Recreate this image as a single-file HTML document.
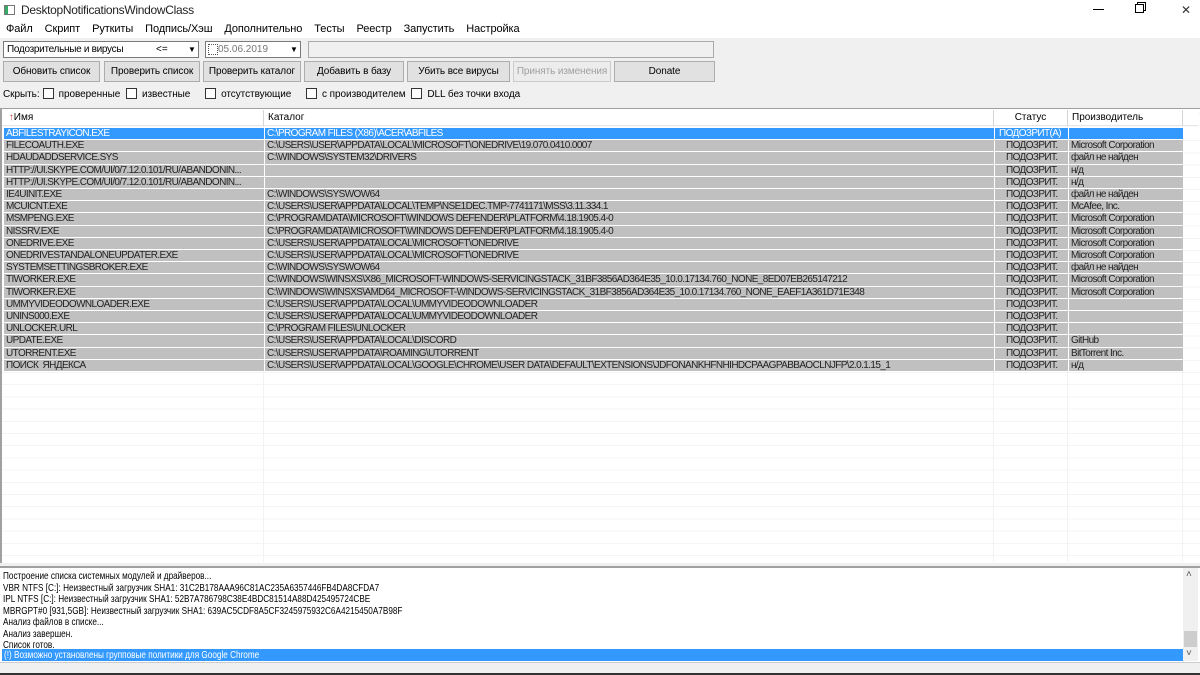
<!DOCTYPE html>
<html><head><meta charset="utf-8"><style>
*{margin:0;padding:0;box-sizing:border-box}
body{width:1200px;height:675px;overflow:hidden;background:#f0f0f0;font-family:"Liberation Sans",sans-serif;font-size:10px;color:#000;position:relative}
.a{position:absolute;white-space:nowrap}
.title{left:0;top:0;width:1200px;height:20px;background:#fff}
.menu{left:0;top:20px;width:1200px;height:18px;background:#fff}
.menu span{margin-right:12px}
.combo{background:#fff;border:1px solid #7a7a7a;height:17px;top:41px}
.btn{top:61px;height:21px;border:1px solid #adadad;background:#e1e1e1;text-align:center;line-height:19px;font-size:10px;letter-spacing:-.1px}
.cb{display:inline-block;width:11px;height:11px;border:1px solid #333;background:#fff;vertical-align:-2px;margin:0 5px 0 3px}
.list{left:0;top:108px;width:1200px;height:455px;background:#fff;border-top:1px solid #a0a0a0;border-left:2px solid #a0a0a0}
.hdr{left:2px;top:110px;height:16px;width:1196px;background:#fff;border-bottom:1px solid #e5e5e5}
.hc{position:absolute;top:0;height:16px;line-height:15px;border-right:1px solid #d5d5d5;padding-left:4px}
.row{position:absolute;left:0;width:1178px;height:12.2px;line-height:11.4px;font-size:10px;letter-spacing:-.6px;color:#222}
.row div{position:absolute;top:0;height:11.2px;background:#c0c0c0;overflow:hidden;padding-left:2px}
.row.sel div{background:#3399ff;color:#fff}
.log{left:0;top:566px;width:1200px;height:96px;background:#fff;border-top:2px solid #a0a0a0}
.logt{position:absolute;left:3px;top:3px;font-size:10.5px;line-height:11.5px;transform:scaleX(.78);transform-origin:0 0;white-space:nowrap}
</style></head><body>
<div class="a title"><span class="a" style="left:4px;top:5px;width:11px;height:10px;border:1px solid #777;background:linear-gradient(90deg,#3a6 0 3px,#fff 3px)"></span><span class="a" style="left:21px;top:3px;font-size:12px;letter-spacing:-.3px;color:#222">DesktopNotificationsWindowClass</span>
<span class="a" style="left:1093px;top:9px;width:11px;border-top:1px solid #000"></span>
<span class="a" style="left:1135px;top:4px;width:9px;height:9px;border:1px solid #000;background:#fff;box-shadow:2px -2px 0 -1px #fff,2px -2px 0 0 #000"></span>
<span class="a" style="left:1181px;top:3px;font-size:12px;color:#333">✕</span></div>
<div class="a menu"><div class="a" style="left:6px;top:3px;font-size:11px;letter-spacing:-.1px"><span>Файл</span><span>Скрипт</span><span>Руткиты</span><span>Подпись/Хэш</span><span>Дополнительно</span><span>Тесты</span><span>Реестр</span><span>Запустить</span><span>Настройка</span></div></div>
<div class="a combo" style="left:3px;width:196px"><span class="a" style="left:3px;top:2px;font-size:10px;letter-spacing:-.3px">Подозрительные и вирусы</span><span class="a" style="left:152px;top:2px">&lt;=</span><span class="a" style="left:181px;top:0;width:14px;height:15px;text-align:center;font-size:8px;line-height:15px">▼</span></div>
<div class="a combo" style="left:205px;width:96px"><span class="a" style="left:2px;top:2px;width:10px;height:11px;border:1px dotted #555"></span><span class="a" style="left:12px;top:2px;color:#777;font-size:10px">05.06.2019</span><span class="a" style="left:81px;top:0;width:14px;height:15px;text-align:center;font-size:8px;line-height:15px">▼</span></div>
<div class="a combo" style="left:308px;width:406px;background:#f0f0f0;border-color:#aaa"></div>
<div class="a btn" style="left:3px;width:97px">Обновить список</div>
<div class="a btn" style="left:104px;width:96px">Проверить список</div>
<div class="a btn" style="left:203px;width:98px">Проверить каталог</div>
<div class="a btn" style="left:304px;width:100px">Добавить в базу</div>
<div class="a btn" style="left:407px;width:103px">Убить все вирусы</div>
<div class="a btn" style="left:513px;width:98px;color:#a0a0a0;border-color:#ccc;background:#ececec">Принять изменения</div>
<div class="a btn" style="left:614px;width:101px">Donate</div>
<div class="a" style="left:3px;top:88px;font-size:10px;letter-spacing:-.05px">Скрыть:<span class="cb"></span>проверенные <span class="cb"></span>известные <span class="cb" style="margin-left:12px"></span>отсутствующие <span class="cb" style="margin-left:12px"></span>с производителем <span class="cb"></span>DLL без точки входа</div>
<div class="a list" style="background:#fff repeating-linear-gradient(180deg,transparent 0 11.2px,#f4f4f4 11.2px 12.2px);background-position:0 20px"></div>
<div class="a" style="left:263px;top:126px;width:1px;height:436px;background:#f2f2f2"></div>
<div class="a" style="left:993px;top:126px;width:1px;height:436px;background:#f2f2f2"></div>
<div class="a" style="left:1067px;top:126px;width:1px;height:436px;background:#f2f2f2"></div>
<div class="a" style="left:1182px;top:126px;width:1px;height:436px;background:#f2f2f2"></div>
<div class="a hdr"><div class="hc" style="left:0;width:262px">&nbsp;<span style="color:#c33">↑</span>Имя</div><div class="hc" style="left:262px;width:730px">Каталог</div><div class="hc" style="left:992px;width:74px;text-align:center;padding:0">Статус</div><div class="hc" style="left:1066px;width:115px">Производитель</div></div>
<div class="a" style="left:4px;top:128px">
<div class="row sel" style="top:0"><div style="left:0;width:260px">ABFILESTRAYICON.EXE</div><div style="left:261px;width:729px">C:\PROGRAM FILES (X86)\ACER\ABFILES</div><div style="left:991px;width:73px;padding:0 0 0 4px">ПОДОЗРИТ(A)</div><div style="left:1065px;width:114px"></div></div>
</div>
<div class="a" style="left:4px;top:140.2px">
<div class="row" style="top:0"><div style="left:0;width:260px">FILECOAUTH.EXE</div><div style="left:261px;width:729px">C:\USERS\USER\APPDATA\LOCAL\MICROSOFT\ONEDRIVE\19.070.0410.0007</div><div style="left:991px;width:73px;padding-left:11px">ПОДОЗРИТ.</div><div style="left:1065px;width:114px">Microsoft Corporation</div></div>
<div class="row" style="top:12.2px"><div style="left:0;width:260px">HDAUDADDSERVICE.SYS</div><div style="left:261px;width:729px">C:\WINDOWS\SYSTEM32\DRIVERS</div><div style="left:991px;width:73px;padding-left:11px">ПОДОЗРИТ.</div><div style="left:1065px;width:114px">файл не найден</div></div>
<div class="row" style="top:24.4px"><div style="left:0;width:260px">HTTP://UI.SKYPE.COM/UI/0/7.12.0.101/RU/ABANDONIN...</div><div style="left:261px;width:729px"></div><div style="left:991px;width:73px;padding-left:11px">ПОДОЗРИТ.</div><div style="left:1065px;width:114px">н/д</div></div>
<div class="row" style="top:36.6px"><div style="left:0;width:260px">HTTP://UI.SKYPE.COM/UI/0/7.12.0.101/RU/ABANDONIN...</div><div style="left:261px;width:729px"></div><div style="left:991px;width:73px;padding-left:11px">ПОДОЗРИТ.</div><div style="left:1065px;width:114px">н/д</div></div>
<div class="row" style="top:48.8px"><div style="left:0;width:260px">IE4UINIT.EXE</div><div style="left:261px;width:729px">C:\WINDOWS\SYSWOW64</div><div style="left:991px;width:73px;padding-left:11px">ПОДОЗРИТ.</div><div style="left:1065px;width:114px">файл не найден</div></div>
<div class="row" style="top:61px"><div style="left:0;width:260px">MCUICNT.EXE</div><div style="left:261px;width:729px">C:\USERS\USER\APPDATA\LOCAL\TEMP\NSE1DEC.TMP-7741171\MSS\3.11.334.1</div><div style="left:991px;width:73px;padding-left:11px">ПОДОЗРИТ.</div><div style="left:1065px;width:114px">McAfee, Inc.</div></div>
<div class="row" style="top:73.2px"><div style="left:0;width:260px">MSMPENG.EXE</div><div style="left:261px;width:729px">C:\PROGRAMDATA\MICROSOFT\WINDOWS DEFENDER\PLATFORM\4.18.1905.4-0</div><div style="left:991px;width:73px;padding-left:11px">ПОДОЗРИТ.</div><div style="left:1065px;width:114px">Microsoft Corporation</div></div>
<div class="row" style="top:85.4px"><div style="left:0;width:260px">NISSRV.EXE</div><div style="left:261px;width:729px">C:\PROGRAMDATA\MICROSOFT\WINDOWS DEFENDER\PLATFORM\4.18.1905.4-0</div><div style="left:991px;width:73px;padding-left:11px">ПОДОЗРИТ.</div><div style="left:1065px;width:114px">Microsoft Corporation</div></div>
<div class="row" style="top:97.6px"><div style="left:0;width:260px">ONEDRIVE.EXE</div><div style="left:261px;width:729px">C:\USERS\USER\APPDATA\LOCAL\MICROSOFT\ONEDRIVE</div><div style="left:991px;width:73px;padding-left:11px">ПОДОЗРИТ.</div><div style="left:1065px;width:114px">Microsoft Corporation</div></div>
<div class="row" style="top:109.8px"><div style="left:0;width:260px">ONEDRIVESTANDALONEUPDATER.EXE</div><div style="left:261px;width:729px">C:\USERS\USER\APPDATA\LOCAL\MICROSOFT\ONEDRIVE</div><div style="left:991px;width:73px;padding-left:11px">ПОДОЗРИТ.</div><div style="left:1065px;width:114px">Microsoft Corporation</div></div>
<div class="row" style="top:122px"><div style="left:0;width:260px">SYSTEMSETTINGSBROKER.EXE</div><div style="left:261px;width:729px">C:\WINDOWS\SYSWOW64</div><div style="left:991px;width:73px;padding-left:11px">ПОДОЗРИТ.</div><div style="left:1065px;width:114px">файл не найден</div></div>
<div class="row" style="top:134.2px"><div style="left:0;width:260px">TIWORKER.EXE</div><div style="left:261px;width:729px">C:\WINDOWS\WINSXS\X86_MICROSOFT-WINDOWS-SERVICINGSTACK_31BF3856AD364E35_10.0.17134.760_NONE_8ED07EB265147212</div><div style="left:991px;width:73px;padding-left:11px">ПОДОЗРИТ.</div><div style="left:1065px;width:114px">Microsoft Corporation</div></div>
<div class="row" style="top:146.4px"><div style="left:0;width:260px">TIWORKER.EXE</div><div style="left:261px;width:729px">C:\WINDOWS\WINSXS\AMD64_MICROSOFT-WINDOWS-SERVICINGSTACK_31BF3856AD364E35_10.0.17134.760_NONE_EAEF1A361D71E348</div><div style="left:991px;width:73px;padding-left:11px">ПОДОЗРИТ.</div><div style="left:1065px;width:114px">Microsoft Corporation</div></div>
<div class="row" style="top:158.6px"><div style="left:0;width:260px">UMMYVIDEODOWNLOADER.EXE</div><div style="left:261px;width:729px">C:\USERS\USER\APPDATA\LOCAL\UMMYVIDEODOWNLOADER</div><div style="left:991px;width:73px;padding-left:11px">ПОДОЗРИТ.</div><div style="left:1065px;width:114px"></div></div>
<div class="row" style="top:170.8px"><div style="left:0;width:260px">UNINS000.EXE</div><div style="left:261px;width:729px">C:\USERS\USER\APPDATA\LOCAL\UMMYVIDEODOWNLOADER</div><div style="left:991px;width:73px;padding-left:11px">ПОДОЗРИТ.</div><div style="left:1065px;width:114px"></div></div>
<div class="row" style="top:183px"><div style="left:0;width:260px">UNLOCKER.URL</div><div style="left:261px;width:729px">C:\PROGRAM FILES\UNLOCKER</div><div style="left:991px;width:73px;padding-left:11px">ПОДОЗРИТ.</div><div style="left:1065px;width:114px"></div></div>
<div class="row" style="top:195.2px"><div style="left:0;width:260px">UPDATE.EXE</div><div style="left:261px;width:729px">C:\USERS\USER\APPDATA\LOCAL\DISCORD</div><div style="left:991px;width:73px;padding-left:11px">ПОДОЗРИТ.</div><div style="left:1065px;width:114px">GitHub</div></div>
<div class="row" style="top:207.4px"><div style="left:0;width:260px">UTORRENT.EXE</div><div style="left:261px;width:729px">C:\USERS\USER\APPDATA\ROAMING\UTORRENT</div><div style="left:991px;width:73px;padding-left:11px">ПОДОЗРИТ.</div><div style="left:1065px;width:114px">BitTorrent Inc.</div></div>
<div class="row" style="top:219.6px"><div style="left:0;width:260px">ПОИСК&nbsp;&nbsp;ЯНДЕКСА</div><div style="left:261px;width:729px">C:\USERS\USER\APPDATA\LOCAL\GOOGLE\CHROME\USER DATA\DEFAULT\EXTENSIONS\JDFONANKHFNHIHDCPAAGPABBAOCLNJFP\2.0.1.15_1</div><div style="left:991px;width:73px;padding-left:11px">ПОДОЗРИТ.</div><div style="left:1065px;width:114px">н/д</div></div>
</div>
<div class="a log"><div class="logt">Построение списка системных модулей и драйверов...<br>VBR NTFS [C:]: Неизвестный загрузчик SHA1: 31C2B178AAA96C81AC235A6357446FB4DA8CFDA7<br>IPL NTFS [C:]: Неизвестный загрузчик SHA1: 52B7A786798C38E4BDC81514A88D425495724CBE<br>MBRGPT#0 [931,5GB]: Неизвестный загрузчик SHA1: 639AC5CDF8A5CF3245975932C6A4215450A7B98F<br>Анализ файлов в списке...<br>Анализ завершен.<br>Список готов.</div></div>
<div class="a" style="left:2px;top:649px;width:1181px;height:12px;background:#3399ff"><div class="logt" style="left:2px;top:0;line-height:12px;color:#fff">(!) Возможно установлены групповые политики для Google Chrome</div></div>
<div class="a" style="left:1183px;top:568px;width:15px;height:93px;background:#f0f0f0"><span class="a" style="left:3px;top:1px;font-size:10px;color:#555">˄</span><span class="a" style="left:1px;top:63px;width:13px;height:16px;background:#cdcdcd"></span><span class="a" style="left:3px;top:80px;font-size:10px;color:#555">˅</span></div>
<div class="a" style="left:0;top:662px;width:1200px;height:13px;background:#f0f0f0;border-top:1px solid #ccc"></div>
<div class="a" style="left:0;top:673px;width:1200px;height:2px;background:#333"></div>
</body></html>
